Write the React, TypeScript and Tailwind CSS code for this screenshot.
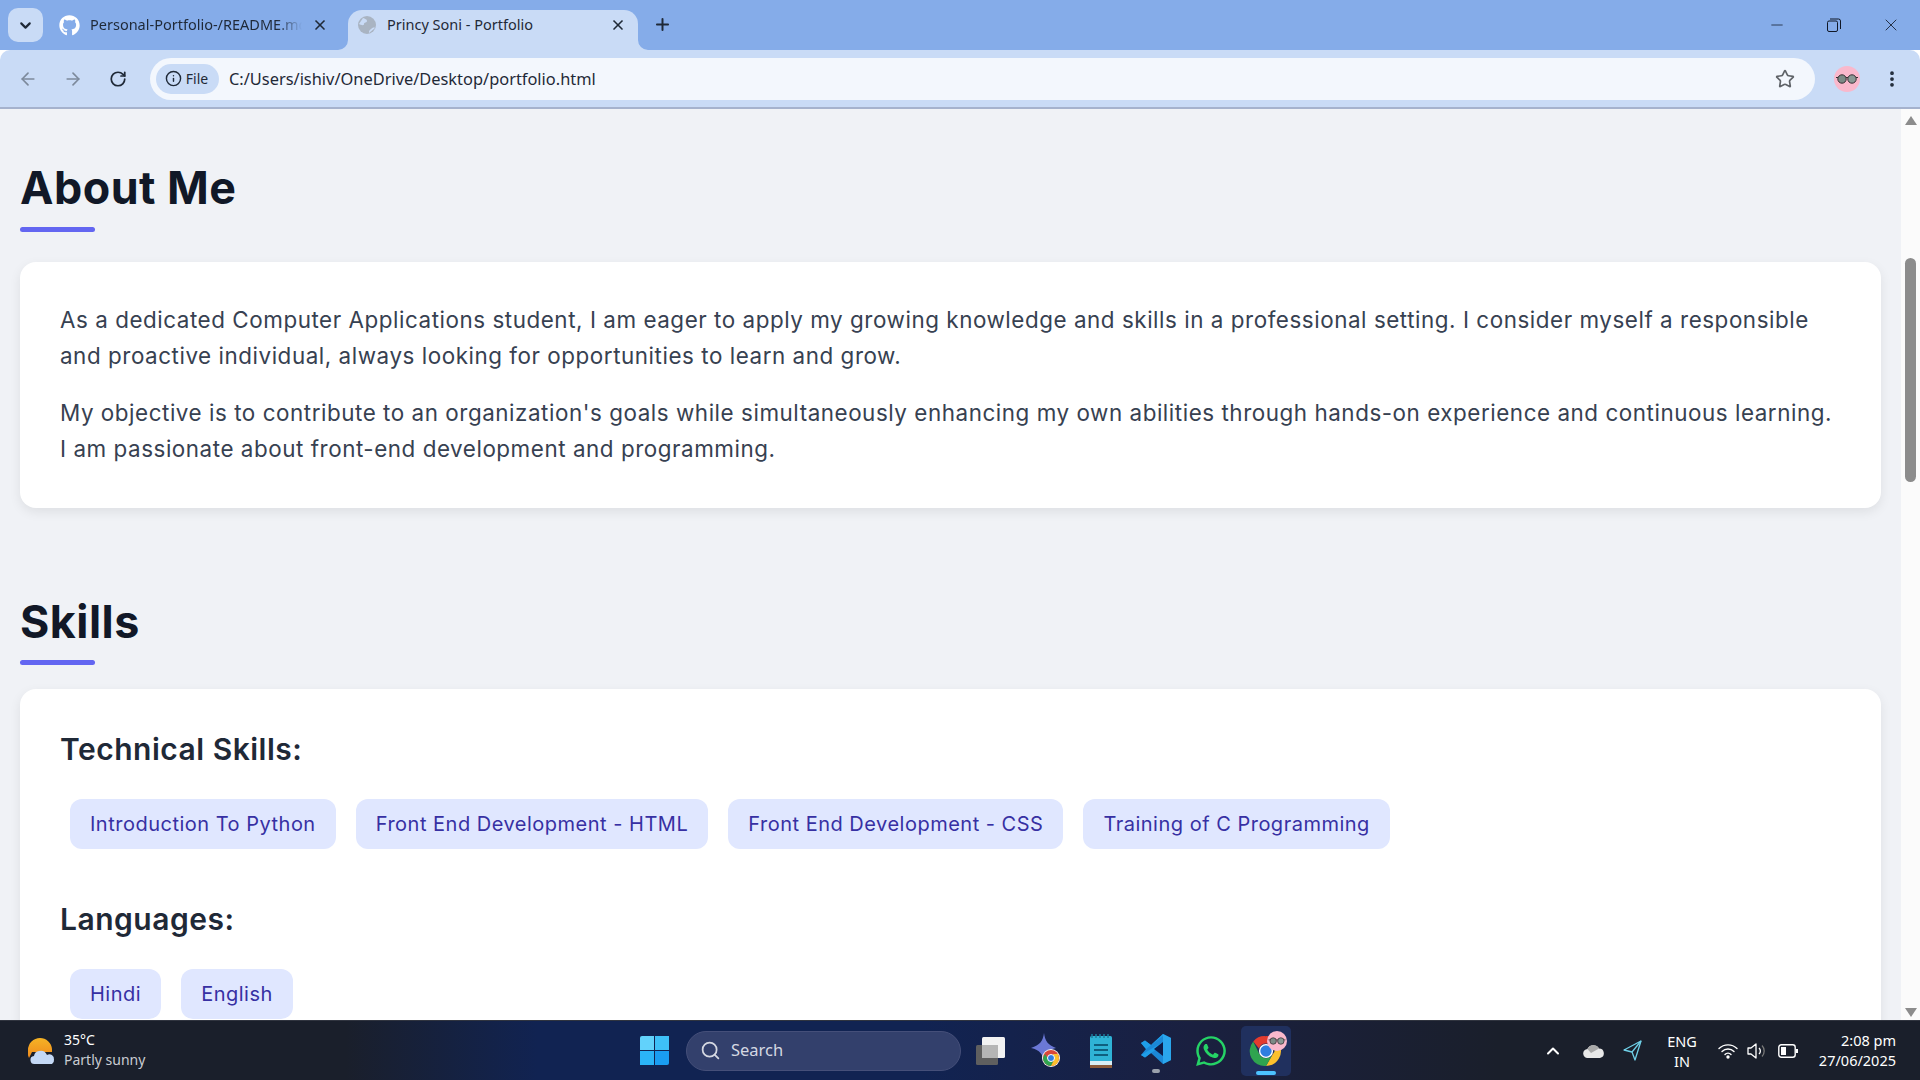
import React from "react";
import { FaGithub, FaWhatsapp } from "react-icons/fa";
import { ArrowLeft, ArrowRight, RotateCw, Info, Star, Plus, X, ChevronDown, ChevronUp, Minus, Search, EllipsisVertical } from "lucide-react";

const inter = "font-['Inter',sans-serif]";

function Glasses({ size }: { size: number }) {
  return (
    <svg width={size} height={size} viewBox="0 0 26 26">
      <circle cx="13" cy="13" r="13" fill="#f9b8cc" />
      <path d="M2 11.5h22" stroke="#333" strokeWidth="1" />
      <circle cx="8" cy="13" r="4.2" fill="#7b8a86" stroke="#3a3035" strokeWidth="1" />
      <circle cx="18" cy="13" r="4.2" fill="#8a9895" stroke="#3a3035" strokeWidth="1" />
    </svg>
  );
}

function ChromeLogo({ size }: { size: number }) {
  return (
    <svg width={size} height={size} viewBox="0 0 48 48">
      <path d="M24 3a21 21 0 0 1 18.200 10.500H24a10.500 10.500 0 0 0-9.900 7L6 10.500A21 21 0 0 1 24 3z" fill="#e33b2e" />
      <path d="M42.200 13.500A21 21 0 0 1 24 45l9.100-15.800a10.500 10.500 0 0 0 0-15.700z" fill="#fbc02d" />
      <path d="M6 10.500 14.900 29a10.500 10.500 0 0 0 18.200.2L24 45A21 21 0 0 1 6 10.500z" fill="#2fa44f" />
      <circle cx="24" cy="24" r="10" fill="#fff" />
      <circle cx="24" cy="24" r="8" fill="#2f7de1" />
    </svg>
  );
}

function Section({ title, children, cardGap, ruleGap }: { title: string; children: React.ReactNode; cardGap: string; ruleGap: string }) {
  return (
    <section className="mb-[87px]">
      <h2 className="text-[44.8px] leading-[54px] font-bold tracking-[0.5px] text-[#111827]">{title}</h2>
      <div className={`${ruleGap} h-[5px] w-[75px] rounded-[3px] bg-[#6366f1]`} />
      <div className={`${cardGap} rounded-[16px] bg-white px-[40px] pt-[40px] pb-[41px] shadow-[0_4px_12px_rgba(0,0,0,0.08)]`}>{children}</div>
    </section>
  );
}

function Pill({ children }: { children: React.ReactNode }) {
  return (
    <span className="flex h-[50px] items-center rounded-[12px] bg-[#e0e7ff] px-[20px] text-[20px] tracking-[0.5px] text-[#3730a3]">
      {children}
    </span>
  );
}

function Subhead({ children }: { children: React.ReactNode }) {
  return <h3 className="text-[30px] leading-[40px] font-semibold tracking-[0.5px] text-[#1f2937]">{children}</h3>;
}

function PillRow({ items }: { items: string[] }) {
  return (
    <div className="mt-[30px] flex gap-[20px] px-[10px]">
      {items.map((t) => (
        <Pill key={t}>{t}</Pill>
      ))}
    </div>
  );
}

function TabStrip() {
  return (
    <div className="flex h-[50px] shrink-0 items-start bg-[#85ace9] font-['Noto_Sans',sans-serif] text-[14.5px] text-[#1f2937]">
      <div className="ml-[8px] mt-[8px] flex h-[34px] w-[35px] items-center justify-center rounded-[10px] bg-[#c9dbf6]">
        <ChevronDown size={17} strokeWidth={3} className="text-[#1f2937]" />
      </div>
      <div className="ml-[16px] flex h-[40px] w-[289px] items-center self-end pb-[10px]">
        <FaGithub size={21} className="text-white" />
        <span className="ml-[10px] w-[212px] overflow-hidden whitespace-nowrap [mask-image:linear-gradient(to_right,black_88%,transparent)]">Personal-Portfolio-/README.md</span>
        <X size={16} strokeWidth={2.5} className="ml-[10px]" />
      </div>
      <div className="relative flex h-[40px] w-[290px] items-center self-end rounded-t-[14px] bg-[#c9dbf6] pb-[10px] pl-[10px]">
        <svg width="10" height="10" viewBox="0 0 10 10" className="absolute bottom-0 left-[-10px]">
          <path d="M10 0v10H0a10 10 0 0 0 10-10z" fill="#c9dbf6" />
        </svg>
        <svg width="10" height="10" viewBox="0 0 10 10" className="absolute bottom-0 right-[-10px]">
          <path d="M0 0v10h10A10 10 0 0 1 0 0z" fill="#c9dbf6" />
        </svg>
        <svg width="18" height="18" viewBox="0 0 18 18">
          <circle cx="9" cy="9" r="9" fill="#a9b4c2" />
          <path d="M5 2c2 1 4 1 4 3s-3 1-3 3-3 1-5 0M11 17c0-3 1-3 2-4s3-2 4-1" fill="#c9dbf6" />
        </svg>
        <span className="ml-[11px] w-[223px] whitespace-nowrap">Princy Soni - Portfolio</span>
        <X size={16} strokeWidth={2.5} />
      </div>
      <Plus size={19} strokeWidth={2.5} className="ml-[15px] mt-[15px]" />
      <div className="ml-auto flex items-center pt-[15px] text-[#111827]">
        <Minus size={18} strokeWidth={1} className="mr-[41px]" />
        <svg width="14" height="14" viewBox="0 0 14 14" className="mr-[40px]" fill="none" stroke="#111827" strokeWidth="1">
          <rect x="0.5" y="3" width="10" height="10.5" rx="1.5" />
          <path d="M3 1h8.5a2 2 0 0 1 2 2v8" />
        </svg>
        <X size={20} strokeWidth={1} className="mr-[19px]" />
      </div>
    </div>
  );
}

function Toolbar() {
  return (
    <div className="flex h-[59px] shrink-0 items-center rounded-t-[10px] border-b-[2px] border-[#a5b2cd] bg-[#c9dbf6]">
      <ArrowLeft size={20} className="ml-[18px] text-[#7d8a9c]" />
      <ArrowRight size={20} className="ml-[25px] text-[#7d8a9c]" />
      <RotateCw size={18} strokeWidth={2.3} className="ml-[26px] text-[#1f2937]" />
      <div className="ml-[23px] flex h-[42px] w-[1665px] items-center rounded-full bg-[#f3f7fd] pl-[6px] font-['Noto_Sans',sans-serif]">
        <div className="flex h-[30px] w-[63px] items-center justify-center gap-[4px] rounded-full bg-[#c9dbf6] pr-[2px] text-[14px] text-[#1f2937]">
          <Info size={17} />
          File
        </div>
        <span className="ml-[10px] pt-[2px] text-[16.4px] text-[#1f2937]">C:/Users/ishiv/OneDrive/Desktop/portfolio.html</span>
        <Star size={20} strokeWidth={2} className="ml-auto mr-[20px] text-[#5f6368]" />
      </div>
      <div className="ml-[19px]"><Glasses size={26} /></div>
      <EllipsisVertical size={20} strokeWidth={2.5} className="ml-[22px] text-[#1f2937]" />
    </div>
  );
}

function Scrollbar() {
  return (
    <div className="flex w-[19px] shrink-0 flex-col items-center bg-[#fbfbfb]">
      <div className="mt-[7px] h-0 w-0 border-x-[6px] border-b-[9px] border-x-transparent border-b-[#8c8c8c]" />
      <div className="mt-[133px] h-[224px] w-[11px] rounded-full bg-[#8c8c8c]" />
      <div className="mt-auto mb-[3px] h-0 w-0 border-x-[6px] border-t-[9px] border-x-transparent border-t-[#8c8c8c]" />
    </div>
  );
}

function Taskbar() {
  return (
    <div className="flex h-[60px] shrink-0 items-center border-t border-[#30343f] bg-[linear-gradient(90deg,#1a1f2b_0%,#1a1f2b_18%,#112352_28%,#112352_48%,#1a2040_62%,#1a1f2b_78%,#1a1f2b_100%)] font-['Noto_Sans',sans-serif] text-white">
      <div className="ml-[28px] w-[28px]">
        <svg width="28" height="28" viewBox="0 0 28 28">
          <defs>
            <linearGradient id="sun" x1="0" y1="0" x2="0" y2="1"><stop offset="0" stopColor="#f5b325" /><stop offset="1" stopColor="#f08a1d" /></linearGradient>
          </defs>
          <path d="M12 1a12 12 0 0 1 12 11v3H4l-3 6a12 12 0 0 1-1-8A12 12 0 0 1 12 1z" fill="url(#sun)" />
          <path d="M7 27a4 4 0 0 1-1-8 6 6 0 0 1 5-5 7 7 0 0 1 8 4 4.600 4.600 0 0 1 7 4.500 4.600 4.600 0 0 1-2 4.500z" fill="#c4d8f5" />
        </svg>
      </div>
      <div className="ml-[8px] w-[90px] pb-[2px] text-[14px] leading-[20px]">
        <div>35°C</div>
        <div className="text-[#c9ccd2]">Partly sunny</div>
      </div>
      <div className="ml-[486px] grid h-[29px] w-[29px] grid-cols-2 gap-[1px]">
        <div className="rounded-tl-[2px] bg-[#62d2fb]" />
        <div className="bg-[#3ec0f8]" />
        <div className="bg-[#2bb4f7]" />
        <div className="rounded-br-[2px] bg-[#1a9df2]" />
      </div>
      <div className="ml-[17px] flex h-[40px] w-[275px] items-center rounded-full border border-[#454f79] bg-[#33406c] pl-[13px] text-[16.5px] text-[#d5d8e2]">
        <Search size={21} strokeWidth={2} />
        <span className="ml-[10px]">Search</span>
      </div>
      <div className="ml-[14px] flex w-[30px] justify-center">
        <svg width="30" height="28" viewBox="0 0 30 28">
          <rect x="1" y="8" width="22" height="20" rx="1.500" fill="#5f5f5f" />
          <rect x="7" y="0" width="23" height="21" rx="1.500" fill="#f2f2f2" />
          <rect x="7" y="8" width="16" height="13" fill="#b5b5b5" />
        </svg>
      </div>
      <div className="ml-[26px] flex w-[30px] justify-center">
        <svg width="30" height="36" viewBox="0 0 30 36">
          <path d="M13 0c1 8 4 12 12 15-8 2-11 6-12 15-1-9-4-13-13-15 9-3 12-7 13-15z" fill="#6b78d6" />
          <circle cx="20" cy="25" r="9" fill="#f4f4f4" />
          <circle cx="20" cy="25" r="8" fill="#d9473a" />
          <path d="M12 25a8 8 0 0 0 8 8l3-6-6-1-3-5z" fill="#2fa44f" />
          <path d="M28 25a8 8 0 0 1-8 8l3-6-1-6h5z" fill="#fbc02d" />
          <circle cx="20" cy="25" r="3.500" fill="#2f7de1" stroke="#fff" />
        </svg>
      </div>
      <div className="ml-[28px] flex w-[24px] justify-center">
        <svg width="22" height="34" viewBox="0 0 22 34">
          <rect x="0" y="2" width="22" height="32" rx="1.500" fill="#2fb3d6" />
          <rect x="0" y="31" width="22" height="3" fill="#8a5a3a" />
          <rect x="0" y="27" width="22" height="4" fill="#d9eef5" />
          <path d="M4 11h14M4 16h14M4 21h14" stroke="#0f5f7f" strokeWidth="2" />
          <path d="M2 0v4M6 0v4M10 0v4M14 0v4M18 0v4" stroke="#1b7d9c" strokeWidth="1.500" />
        </svg>
      </div>
      <div className="ml-[27px] flex w-[32px] flex-col items-center">
        <svg width="32" height="32" viewBox="0 0 32 32" className="mt-[4px]">
          <path d="M23 1 11 12 5 7.500 1 10l5 6-5 6 4 2.500L11 20l12 11 8-4V5z" fill="#1b88d6" />
          <path d="M23 1 11 12 5 7.500 1 10l5 6 17-13zM1 22l4 2.500L11 20l12-8V9z" fill="#1f9ee8" />
          <path d="M23 1v30l8-4V5z" fill="#2aa6ec" />
          <path d="M23 9 14 16l9 7z" fill="#0e1c48" />
        </svg>
        <div className="mt-[4px] h-[4px] w-[8px] rounded-full bg-[#9aa0ab]" />
      </div>
      <div className="ml-[24px] flex w-[30px] justify-center">
        <FaWhatsapp size={34} className="text-[#25d366]" />
      </div>
      <div className="relative ml-[15px] flex h-[50px] w-[50px] flex-col items-center justify-center rounded-[5px] bg-[#20305e]">
        <ChromeLogo size={34} />
        <div className="absolute left-[26px] top-[5px]"><Glasses size={20} /></div>
        <div className="absolute bottom-[1px] h-[4px] w-[20px] rounded-full bg-[#4cc2ff]" />
      </div>
      <ChevronUp size={20} strokeWidth={2.4} className="ml-[252px]" />
      <div className="ml-[20px]">
        <svg width="22" height="14" viewBox="0 0 22 14">
          <path d="M5 14a4.500 4.500 0 0 1-.6-9A6.500 6.500 0 0 1 16 4.500 4.800 4.800 0 0 1 17 14z" fill="#e8e8e8" />
          <path d="M4.400 5A6.500 6.500 0 0 1 16 4.500L8 9z" fill="#a9a9a9" />
        </svg>
      </div>
      <div className="ml-[18px]">
        <svg width="20" height="22" viewBox="0 0 20 22" fill="none" stroke="#6fd0e8" strokeWidth="1.300" strokeLinejoin="round">
          <path d="M18 1 1 10l8 2 3 8z" />
          <path d="M18 1 9 12" />
        </svg>
      </div>
      <div className="ml-[19px] w-[40px] text-center text-[14.5px] leading-[20px]">
        <div>ENG</div>
        <div>IN</div>
      </div>
      <div className="ml-[16px]">
        <svg width="20" height="16" viewBox="0 0 20 16" fill="none" stroke="#fff" strokeWidth="1.400" strokeLinecap="round">
          <path d="M1 5.500a13 13 0 0 1 18 0M4 8.500a8.500 8.500 0 0 1 12 0M7 11.500a4 4 0 0 1 6 0" />
          <circle cx="10" cy="14" r="1" fill="#fff" />
        </svg>
      </div>
      <div className="ml-[9px]">
        <svg width="20" height="18" viewBox="0 0 20 18" fill="none" stroke="#fff" strokeWidth="1.300" strokeLinejoin="round">
          <path d="M1 6h3l5-4v14l-5-4H1z" />
          <path d="M12 6a4 4 0 0 1 0 6" />
          <path d="M15 3.500a8 8 0 0 1 0 11" stroke="#777" />
        </svg>
      </div>
      <div className="ml-[11px]">
        <svg width="20" height="14" viewBox="0 0 20 14" fill="none">
          <rect x="0.800" y="0.800" width="16.400" height="12.400" rx="2.500" stroke="#fff" strokeWidth="1.400" />
          <rect x="3" y="3" width="5" height="8" fill="#fff" />
          <rect x="18" y="5" width="2" height="4" fill="#fff" />
        </svg>
      </div>
      <div className="ml-auto mr-[24px] pb-[2px] text-right text-[14.5px] leading-[20px]">
        <div>2:08 pm</div>
        <div>27/06/2025</div>
      </div>
    </div>
  );
}

export default function App() {
  return (
    <div className={`flex h-screen w-full flex-col overflow-hidden ${inter}`}>
      <TabStrip />
      <Toolbar />
      <div className="flex min-h-0 flex-1 bg-[#f0f2f6]">
        <main className="min-w-0 flex-1 overflow-hidden px-[20px] pt-[52px]">
          <Section title="About Me" ruleGap="mt-[12px]" cardGap="mt-[30px]">
            <div className="text-[22.4px] leading-[36px] tracking-[0.55px] text-[#374151]">
              <p>As a dedicated Computer Applications student, I am eager to apply my growing knowledge and skills in a professional setting. I consider myself a responsible and proactive individual, always looking for opportunities to learn and grow.</p>
              <p className="mt-[21px]">My objective is to contribute to an organization's goals while simultaneously enhancing my own abilities through hands-on experience and continuous learning. I am passionate about front-end development and programming.</p>
            </div>
          </Section>
          <Section title="Skills" ruleGap="mt-[11px]" cardGap="mt-[24px]">
            <Subhead>Technical Skills:</Subhead>
            <PillRow items={["Introduction To Python", "Front End Development - HTML", "Front End Development - CSS", "Training of C Programming"]} />
            <div className="mt-[50px]">
              <Subhead>Languages:</Subhead>
            </div>
            <PillRow items={["Hindi", "English"]} />
          </Section>
        </main>
        <Scrollbar />
      </div>
      <Taskbar />
    </div>
  );
}
